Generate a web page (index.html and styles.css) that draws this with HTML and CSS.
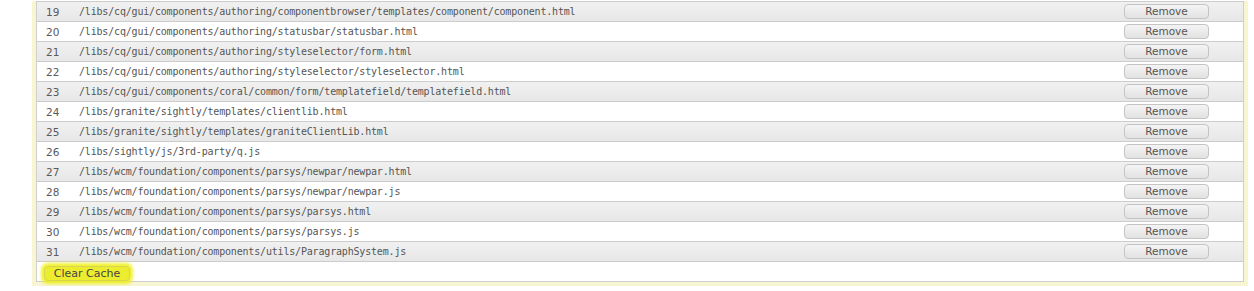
FILE: index.html
```html
<!DOCTYPE html>
<html>
<head>
<meta charset="utf-8">
<link rel="stylesheet" href="styles.css">
</head>
<body>
<div class="panel">
  <div class="list">
    <div class="row odd"><span class="num">19</span><span class="path">/libs/cq/gui/components/authoring/componentbrowser/templates/component/component.html</span><button class="btn">Remove</button></div>
    <div class="row"><span class="num">20</span><span class="path">/libs/cq/gui/components/authoring/statusbar/statusbar.html</span><button class="btn">Remove</button></div>
    <div class="row odd"><span class="num">21</span><span class="path">/libs/cq/gui/components/authoring/styleselector/form.html</span><button class="btn">Remove</button></div>
    <div class="row"><span class="num">22</span><span class="path">/libs/cq/gui/components/authoring/styleselector/styleselector.html</span><button class="btn">Remove</button></div>
    <div class="row odd"><span class="num">23</span><span class="path">/libs/cq/gui/components/coral/common/form/templatefield/templatefield.html</span><button class="btn">Remove</button></div>
    <div class="row"><span class="num">24</span><span class="path">/libs/granite/sightly/templates/clientlib.html</span><button class="btn">Remove</button></div>
    <div class="row odd"><span class="num">25</span><span class="path">/libs/granite/sightly/templates/graniteClientLib.html</span><button class="btn">Remove</button></div>
    <div class="row"><span class="num">26</span><span class="path">/libs/sightly/js/3rd-party/q.js</span><button class="btn">Remove</button></div>
    <div class="row odd"><span class="num">27</span><span class="path">/libs/wcm/foundation/components/parsys/newpar/newpar.html</span><button class="btn">Remove</button></div>
    <div class="row"><span class="num">28</span><span class="path">/libs/wcm/foundation/components/parsys/newpar/newpar.js</span><button class="btn">Remove</button></div>
    <div class="row odd"><span class="num">29</span><span class="path">/libs/wcm/foundation/components/parsys/parsys.html</span><button class="btn">Remove</button></div>
    <div class="row"><span class="num">30</span><span class="path">/libs/wcm/foundation/components/parsys/parsys.js</span><button class="btn">Remove</button></div>
    <div class="row odd"><span class="num">31</span><span class="path">/libs/wcm/foundation/components/utils/ParagraphSystem.js</span><button class="btn">Remove</button></div>
    <div class="row foot"><button class="btn clear">Clear Cache</button></div>
  </div>
</div>
</body>
</html>
```

FILE: styles.css
```css
html, body {
  margin: 0;
  padding: 0;
  background: #fff;
}
body {
  padding-left: 32px;
}
.panel {
  width: 1208px;
  border: 4px solid #f8f5d3;
  border-top: 0;
  background: #fff;
}
.list {
  border: 1px solid #cfcfcf;
  border-top: 0;
}
.row {
  display: flex;
  align-items: center;
  height: 19px;
  border-top: 1px solid #cccccc;
  background: #fff;
}
.row:first-child {
  margin-top: 1px;
}
.row.odd {
  background: linear-gradient(#f1f1f1, #e7e7e7);
}
.num {
  width: 42px;
  padding-left: 9px;
  box-sizing: border-box;
  font-family: "DejaVu Sans", Verdana, sans-serif;
  font-size: 10.5px;
  color: #5a5a5a;
}
.path {
  flex: 1;
  font-family: "DejaVu Sans Mono", monospace;
  font-size: 10px;
  letter-spacing: -0.18px;
  color: #555;
}
.btn {
  width: 85px;
  height: 15px;
  margin-right: 34px;
  padding: 0;
  border: 1px solid #c4c4c4;
  border-radius: 4px;
  background: linear-gradient(#f4f4f4, #e2e2e2);
  font-family: "DejaVu Sans", Verdana, sans-serif;
  font-size: 10.5px;
  line-height: 13px;
  color: #555;
}
.foot {
  height: 19px;
  background: #fff;
}
.btn.clear {
  width: 86px;
  margin-left: 7px;
  margin-top: 3px;
  background: #eded30;
  border-color: #d6d650;
  box-shadow: 0 0 3px 3px rgba(238, 238, 20, 0.85);
  color: #444;
  font-size: 11px;
}
```
